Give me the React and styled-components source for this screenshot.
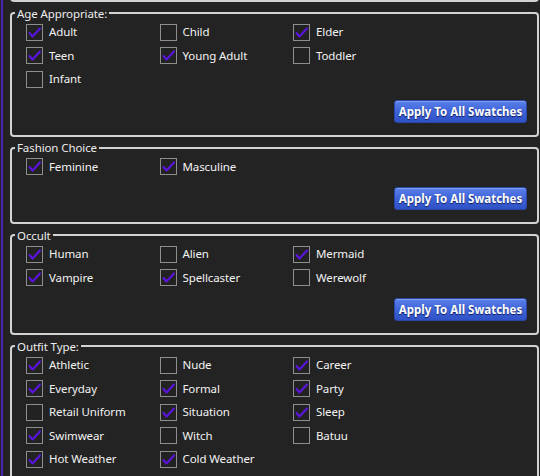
import styled, { createGlobalStyle } from 'styled-components';

const GlobalStyle = createGlobalStyle`
  html, body {
    margin: 0;
    padding: 0;
    height: 476px;
    overflow: hidden;
    background: #232323;
  }
  body {
    font-family: 'Segoe UI', 'Noto Sans', 'Open Sans', sans-serif;
    font-size: 11.5px;
    color: #f0f0f0;
  }
`;

const Page = styled.div`
  height: 476px;
  margin-left: 1px;
  border-left: 2px solid #4b23b4;
  padding: 0 1px 0 7px;
  display: flex;
  flex-direction: column;
  gap: 3.5px;
`;

const BoxTail = styled.div`
  height: 0;
  margin-top: -2px;
  border: 2px solid #d2d2d2;
  border-top: none;
  border-radius: 0 0 4px 4px;
  padding-top: 2px;
`;

const Group = styled.fieldset`
  margin: 0;
  padding: 0 10px 12px 0;
  border: 2px solid #d2d2d2;
  border-radius: 4px;
  min-width: 0;
`;

const Legend = styled.legend`
  margin-left: 3px;
  padding: 0 2px;
  font-size: 11.5px;
  letter-spacing: -0.1px;
  line-height: 15px;
  color: #ececec;
`;

const Grid = styled.div`
  display: grid;
  grid-template-columns: repeat(3, 133.5px);
  grid-auto-rows: 23.5px;
  padding-left: 14px;
`;

const Item = styled.label`
  display: flex;
  align-items: center;
  gap: 6px;
  white-space: nowrap;
`;

const Box = styled.span`
  width: 15px;
  height: 15px;
  flex: none;
  border: 1px solid #8e8e8e;
  background: #222;
  display: flex;
  align-items: center;
  justify-content: center;
`;

const Label = styled.span`
  font-size: 11.5px;
  letter-spacing: -0.1px;
  line-height: 16px;
  color: #f2f2f2;
`;

const Footer = styled.div`
  display: flex;
  justify-content: flex-end;
  padding-top: 8.5px;
`;

const ApplyButton = styled.button`
  width: 133px;
  height: 23px;
  padding: 0;
  border: 1px solid #2a47a8;
  border-radius: 3px;
  background: linear-gradient(#5a80ea, #3e63d8 50%, #2f52c6);
  box-shadow: inset 0 1px 0 rgba(255, 255, 255, 0.25);
  font-family: 'Segoe UI', 'Noto Sans', 'Open Sans', sans-serif;
  font-size: 11.5px;
  font-weight: 700;
  color: #fff;
  text-shadow: 0 1px 1px rgba(0, 0, 40, 0.7);
  cursor: pointer;
`;

const Check = () => (
  <svg width="15" height="15" viewBox="0 0 15 15">
    <polyline
      points="2.5,8 5.5,11.5 13,3.5"
      fill="none"
      stroke="#5a14dc"
      strokeWidth="2.2"
      strokeLinecap="round"
      strokeLinejoin="round"
    />
  </svg>
);

const CheckItem = ({ label, checked }) => (
  <Item>
    <Box>{checked && <Check />}</Box>
    <Label>{label}</Label>
  </Item>
);

const groups = [
  {
    title: 'Age Appropriate:',
    items: [
      ['Adult', true], ['Child', false], ['Elder', true],
      ['Teen', true], ['Young Adult', true], ['Toddler', false],
      ['Infant', false],
    ],
  },
  {
    title: 'Fashion Choice',
    items: [['Feminine', true], ['Masculine', true]],
  },
  {
    title: 'Occult',
    items: [
      ['Human', true], ['Alien', false], ['Mermaid', true],
      ['Vampire', true], ['Spellcaster', true], ['Werewolf', false],
    ],
  },
  {
    title: 'Outfit Type:',
    items: [
      ['Athletic', true], ['Nude', false], ['Career', true],
      ['Everyday', true], ['Formal', true], ['Party', true],
      ['Retail Uniform', false], ['Situation', true], ['Sleep', true],
      ['Swimwear', true], ['Witch', false], ['Batuu', false],
      ['Hot Weather', true], ['Cold Weather', true],
    ],
  },
];

export default function App() {
  return (
    <>
      <GlobalStyle />
      <Page>
        <BoxTail />
        {groups.map((g) => (
          <Group key={g.title}>
            <Legend>{g.title}</Legend>
            <Grid>
              {g.items.map(([label, checked]) => (
                <CheckItem key={label} label={label} checked={checked} />
              ))}
            </Grid>
            <Footer>
              <ApplyButton>Apply To All Swatches</ApplyButton>
            </Footer>
          </Group>
        ))}
      </Page>
    </>
  );
}
